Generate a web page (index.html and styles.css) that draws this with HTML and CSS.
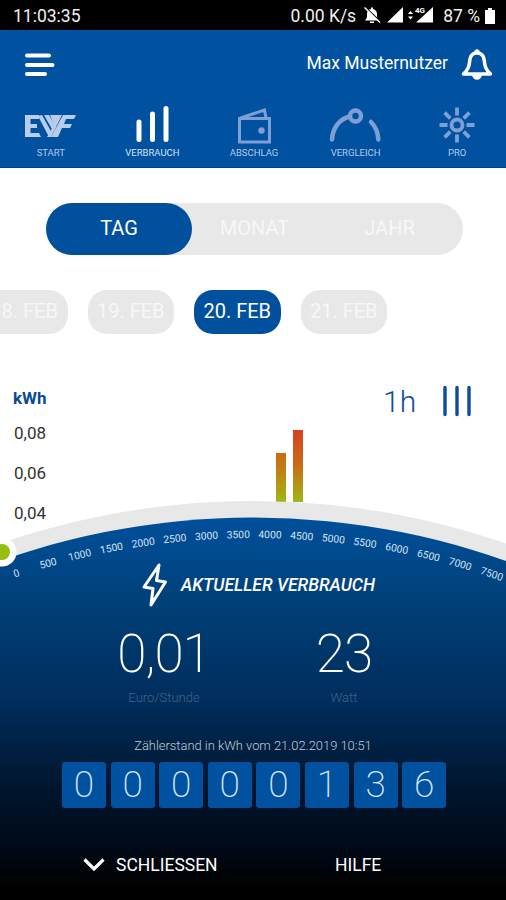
FILE: index.html
```html
<!DOCTYPE html>
<html lang="de">
<head>
    <meta charset="UTF-8">
    <meta name="viewport" content="width=device-width, initial-scale=1.0">
    <title>Verbrauch</title>
    <link rel="stylesheet" href="styles.css">
</head>

<body>
    <div class="status-bar">
        <span class="clock">11:03:35</span>
        <span class="net-speed">0.00 K/s</span>
        <svg class="status-icons" width="72" height="18" viewBox="0 0 72 18">
            <path d="M2 13.500h14l-2-3V7c0-3-2-4.500-4-5V.5H8V2C5.500 2.500 4 4 4 7v3.500zM7 14.500h4V16H7z" fill="#fff"/>
            <path d="M3 1l15 14" stroke="#000" stroke-width="1.500"/>
            <path d="M1.500 .5l15.500 15" stroke="#fff" stroke-width="1.400"/>
            <path d="M24 15.500h16V0z" fill="#fff"/>
            <path d="M45 7l2.500-3L50 7zM45 9.500h5l-2.500 3z" fill="#fff"/>
            <path d="M53 15.500h17V0z" fill="#fff"/>
            <text class="network" x="52" y="6">4G</text>
        </svg>
        <span class="battery-text">87 %</span>
        <svg class="battery" width="10" height="16" viewBox="0 0 10 16">
            <path d="M0 2h3V0h4v2h3v14H0z" fill="#fff"/>
        </svg>
    </div>

    <header>
        <div class="top-row">
            <svg class="menu-icon" width="33" height="26" viewBox="0 0 33 26">
                <path d="M4 3.500h22M4 13h25.500M4 22h18" stroke="#fff" stroke-width="4" stroke-linecap="round"/>
            </svg>
            <span class="user-name">Max Musternutzer</span>
            <svg class="bell-icon" width="32" height="32" viewBox="0 0 32 32">
                <path d="M16 4c-4.500 0-6.700 3-7.200 7-.5 6-1.500 9.500-6.300 14h27c-4.800-4.500-5.800-8-6.300-14-.5-4-2.700-7-7.200-7z" fill="none" stroke="#fff" stroke-width="3.500" stroke-linejoin="round"/>
                <path d="M11 26h10c-.5 3-2.500 4.800-5 4.800s-4.500-1.800-5-4.800zM13.500 1.500l2.500-1.500 2.500 1.500v2.500h-5z" fill="#fff"/>
            </svg>
        </div>
        <nav>
            <a class="tab">
                <svg width="54" height="42" viewBox="0 0 54 42">
                    <g fill="#b9cdeb">
                        <path d="M1 12h14v4H6.500v5H13v4H6.500v5H15l2 4H1z"/>
                        <path d="M14 13l4-1 10 18-2 4h-1zM20 12h5l7 12-2.500 5z"/>
                        <path d="M26 12h12L27 34h-4l7-12z"/>
                        <path d="M39 12h13l-2 4h-8l-2 5h8l-2 4h-8l-4 9h-7z"/>
                    </g>
                </svg>
                <span>START</span>
            </a>
            <a class="tab active">
                <svg width="54" height="42" viewBox="0 0 54 42">
                    <path d="M14 19v17.500M27.500 11v25.500M41 5.500v31" stroke="#fff" stroke-width="5" stroke-linecap="round"/>
                </svg>
                <span>VERBRAUCH</span>
            </a>
            <a class="tab">
                <svg width="54" height="42" viewBox="0 0 54 42" fill="none" stroke="#7f9fd4" stroke-width="3">
                    <path d="M12.500 15.500h30V39h-30zM13.500 15l24-8 1.500 8"/>
                    <circle cx="34.500" cy="27.500" r="3.200" fill="#7f9fd4" stroke="none"/>
                </svg>
                <span>ABSCHLAG</span>
            </a>
            <a class="tab">
                <svg width="54" height="42" viewBox="0 0 54 42" fill="none" stroke="#7f9fd4" stroke-width="4.500" stroke-linecap="round">
                    <path d="M3 36.500C3.500 25.500 10 16 21 13.500M42 19c4.500 4.500 7 10 7.300 17.500"/>
                    <circle cx="26.500" cy="13" r="5.500"/>
                </svg>
                <span>VERGLEICH</span>
            </a>
            <a class="tab">
                <svg width="54" height="42" viewBox="0 0 54 42" fill="none" stroke="#7f9fd4" stroke-width="3.800">
                    <circle cx="27" cy="22" r="5.500"/>
                    <path d="M27 4.500v8M27 31.500v8M9.500 22h8M36.500 22h8M14.600 9.600l5.700 5.700M33.700 28.700l5.700 5.700M14.600 34.400l5.700-5.700M33.700 15.300l5.700-5.700"/>
                </svg>
                <span>PRO</span>
            </a>
        </nav>
    </header>

    <main>
        <div class="range-switch">
            <span class="range selected">TAG</span>
            <span class="range">MONAT</span>
            <span class="range">JAHR</span>
        </div>

        <div class="days">
            <span class="day first">8. FEB</span>
            <span class="day">19. FEB</span>
            <span class="day selected">20. FEB</span>
            <span class="day">21. FEB</span>
        </div>

        <section class="chart">
            <div class="axis">
                <strong>kWh</strong>
                <span>0,08</span>
                <span>0,06</span>
                <span>0,04</span>
            </div>
            <div class="bars">
                <div class="bar" style="height: 49px"></div>
                <div class="bar high" style="height: 72px"></div>
            </div>
            <div class="interval">
                <span>1h</span>
                <svg width="30" height="32" viewBox="0 0 30 32">
                    <path d="M3 2.500v27M15 2.500v27M27 2.500v27" stroke="#0d4c9c" stroke-width="3.400" stroke-linecap="round"/>
                </svg>
            </div>
        </section>
    </main>

    <section class="meter">
        <svg class="dial" width="506" height="400" viewBox="0 500 506 400">
            <defs>
                <linearGradient id="night" gradientUnits="userSpaceOnUse" x1="0" y1="517" x2="0" y2="900">
                    <stop offset="0" stop-color="#00509c"/>
                    <stop offset="0.220" stop-color="#004078"/>
                    <stop offset="0.480" stop-color="#002d5c"/>
                    <stop offset="0.700" stop-color="#00162f"/>
                    <stop offset="0.850" stop-color="#000b19"/>
                    <stop offset="0.970" stop-color="#000"/>
                </linearGradient>
            </defs>
            <circle cx="253" cy="1276.500" r="775.500" fill="#e8e8e8"/>
            <circle cx="253" cy="1276.500" r="759" fill="url(#night)"/>
            <g id="scale" class="scale"></g>
            <circle cx="2" cy="552" r="14.500" fill="#fff"/>
            <circle cx="2" cy="552" r="8" fill="#96be0d"/>
        </svg>

        <div class="meter-content">
            <h2>
                <svg width="28" height="46" viewBox="0 0 28 46">
                    <path d="M18 3L3 25l9 1.500L10 43l14.500-23-9-1.500z" fill="none" stroke="#fff" stroke-width="3" stroke-linejoin="round"/>
                </svg>
                <span>AKTUELLER VERBRAUCH</span>
            </h2>
            <div class="values">
                <div class="value">
                    <span class="number">0,01</span>
                    <span class="unit">Euro/Stunde</span>
                </div>
                <div class="value">
                    <span class="number">23</span>
                    <span class="unit">Watt</span>
                </div>
            </div>
            <p class="reading-label">Zählerstand in kWh vom 21.02.2019 10:51</p>
            <div class="counter">
                <span>0</span><span>0</span><span>0</span><span>0</span><span>0</span><span>1</span><span>3</span><span>6</span>
            </div>
            <footer>
                <a class="close">
                    <svg width="22" height="16" viewBox="0 0 22 16">
                        <path d="M1.500 2.500L11 12l9.500-9.500" fill="none" stroke="#fff" stroke-width="3.200"/>
                    </svg>
                    <span>SCHLIESSEN</span>
                </a>
                <a class="help">HILFE</a>
            </footer>
        </div>
    </section>

    <script>
        // Scale labels follow the curve of the dial
        const scale = document.getElementById('scale');
        const RADIUS = 738.5;

        for (let i = 0; i <= 15; i++) {
            const dx = -235.5 + i * 31.55;
            const angle = Math.asin(dx / RADIUS);
            const y = 1276.5 - RADIUS * Math.cos(angle);
            const label = document.createElementNS('http://www.w3.org/2000/svg', 'text');
            label.setAttribute('transform', `translate(${253 + dx} ${y}) rotate(${angle * 180 / Math.PI})`);
            label.textContent = i * 500;
            scale.appendChild(label);
        }
    </script>
</body>
</html>
```

FILE: styles.css
```css
* {
    box-sizing: border-box;
}

body {
    font-family: Roboto, "Liberation Sans", sans-serif;
    margin: 0;
    width: 506px;
    height: 900px;
    overflow: hidden;
    background-color: #fff;
}

.status-bar {
    display: flex;
    align-items: center;
    height: 30px;
    padding: 2px 11px 0 13px;
    background-color: #000;
    color: #f0f0f0;
    font-size: 17.5px;
    white-space: nowrap;
}

.net-speed {
    margin-left: auto;
}

.status-icons {
    margin-left: 7px;
}

.network {
    fill: #fff;
    stroke: #000;
    stroke-width: 1.5px;
    paint-order: stroke;
    font-size: 8px;
    font-weight: 700;
}

.battery-text {
    margin-left: 8px;
}

.battery {
    margin-left: 5px;
}

header {
    height: 138px;
    background-color: #00519f;
    border-bottom: 1px solid #004088;
    color: #fff;
}

.top-row {
    display: flex;
    align-items: center;
    height: 69px;
    padding: 0 13px 0 23px;
}

.user-name {
    margin-left: auto;
    margin-right: 13px;
    margin-top: -3px;
    font-size: 17.5px;
}

nav {
    display: flex;
    padding-top: 4px;
}

.tab {
    display: flex;
    flex-direction: column;
    align-items: center;
    width: 101.6px;
    flex-shrink: 0;
    color: #b5caea;
    font-size: 9.5px;
    line-height: 12px;
    gap: 2px;
}

.tab.active {
    color: #d5e2f5;
}

.range-switch {
    display: flex;
    width: 417px;
    height: 52px;
    margin: 35px 0 0 46px;
    border-radius: 26px;
    background-color: #e8e8e8;
    color: #f7f7f7;
    font-size: 20px;
    line-height: 51px;
    text-align: center;
}

.range {
    width: 135px;
}

.range.selected {
    width: 146px;
    margin-right: -5px;
    border-radius: 26px;
    background-color: #00509e;
    color: #fff;
}

.days {
    display: flex;
    gap: 20px;
    margin: 35px 0 0;
}

.day {
    width: 86.5px;
    height: 44px;
    border-radius: 19px;
    background-color: #e8e8e8;
    color: #f7f7f7;
    font-size: 20px;
    line-height: 43px;
    text-align: center;
    white-space: nowrap;
}

.day.first {
    width: 67.5px;
    padding-right: 8px;
    border-radius: 0 19px 19px 0;
}

.day.selected {
    background-color: #00509e;
    color: #fff;
}

.chart {
    display: flex;
    height: 168px;
}

.axis {
    width: 60px;
    padding: 53px 0 0 13px;
    color: #333;
    font-size: 17px;
}

.axis strong {
    display: block;
    color: #08489a;
    line-height: 23px;
    margin-bottom: 12px;
}

.axis span {
    display: block;
    height: 40px;
    padding-left: 1px;
    line-height: 23px;
}

.bars {
    display: flex;
    align-items: flex-end;
    gap: 7px;
    width: 323px;
    padding-left: 216px;
}

.bar {
    width: 10px;
    background: linear-gradient(#cd6815, #b98b12 50%, #a0b712);
}

.bar.high {
    background: linear-gradient(#d9401e, #c76e18 50%, #a0b712);
}

.interval {
    display: flex;
    align-items: center;
    gap: 26px;
    height: 32px;
    margin-top: 51px;
    color: #0d4c9c;
    font-size: 30px;
    font-weight: 300;
}

.meter {
    display: grid;
    height: 400px;
    margin-top: -2px;
}

.dial,
.meter-content {
    grid-area: 1 / 1;
}

.scale text {
    fill: #d5e3f4;
    font-size: 10.3px;
    text-anchor: middle;
}

.meter-content {
    color: #fff;
    padding-top: 62px;
}

h2 {
    display: flex;
    align-items: center;
    gap: 12px;
    height: 46px;
    margin: 0 0 0 141px;
    font-size: 17.5px;
    font-style: italic;
    font-weight: 500;
}

.values {
    display: flex;
    margin-top: 18px;
}

.value {
    display: flex;
    flex-direction: column;
    align-items: center;
    width: 180px;
}

.value:first-child {
    margin-left: 74px;
}

.number {
    font-size: 53px;
    font-weight: 200;
    line-height: 56px;
    letter-spacing: -1px;
}

.unit {
    margin-top: 8px;
    color: #43638b;
    font-size: 13px;
    font-weight: 300;
    line-height: 16px;
}

.reading-label {
    margin: 32px 0 8px;
    color: #c0cbd9;
    font-size: 12.9px;
    font-weight: 300;
    line-height: 16px;
    text-align: center;
}

.counter {
    display: flex;
    gap: 4.6px;
    margin-left: 62px;
}

.counter span {
    width: 44px;
    height: 46px;
    border-radius: 3px;
    background-color: #00519f;
    color: #d5e7f8;
    font-size: 37px;
    font-weight: 200;
    line-height: 46px;
    text-align: center;
}

footer {
    display: flex;
    align-items: center;
    margin-top: 46px;
    padding-left: 83px;
    font-size: 17.5px;
    line-height: 22px;
}

.close {
    display: flex;
    align-items: center;
    gap: 11px;
    width: 252px;
}
```
